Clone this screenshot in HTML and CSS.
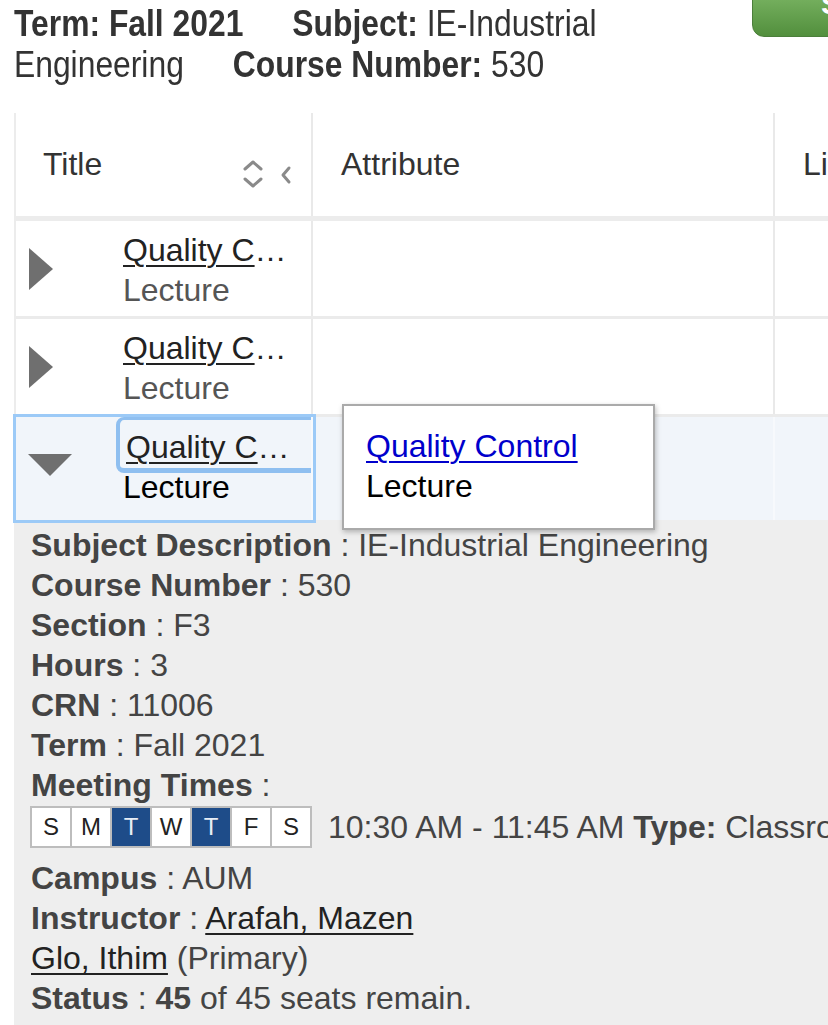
FILE: index.html
```html
<!DOCTYPE html>
<html lang="en">
<head>
<meta charset="utf-8">
<title>Course Search Results</title>
<link rel="stylesheet" href="styles.css">
</head>
<body>
<div class="page">
  <header class="summary">
    <span class="seg"><b>Term: Fall 2021</b></span><span class="seg"><b>Subject:</b> IE-Industrial Engineering</span><span class="seg"><b>Course Number:</b> 530</span>
  </header>
  <a class="btn-search" href="#">Search Again</a>

  <div class="results">
    <div class="row head">
      <div class="cell c1">
        <span class="htext">Title</span>
        <span class="sort">
          <svg width="22" height="30" viewBox="0 0 22 30" class="ico-sort"><path d="M3 10 L11 3 L19 10" /><path d="M3 20 L11 27 L19 20" /></svg>
          <svg width="12" height="20" viewBox="0 0 12 20" class="ico-left"><path d="M9 3 L3 10 L9 17" /></svg>
        </span>
      </div>
      <div class="cell c2"><span class="htext">Attribute</span></div>
      <div class="cell c3"><span class="htext">Linked Sections</span></div>
    </div>

    <div class="row">
      <div class="cell c1">
        <span class="toggle"><span class="tri-right"></span></span>
        <div class="ttl"><a class="tlink" href="#">Quality Control</a><div class="sched">Lecture</div></div>
      </div>
      <div class="cell c2"></div>
      <div class="cell c3"></div>
    </div>

    <div class="row">
      <div class="cell c1">
        <span class="toggle"><span class="tri-right"></span></span>
        <div class="ttl"><a class="tlink" href="#">Quality Control</a><div class="sched">Lecture</div></div>
      </div>
      <div class="cell c2"></div>
      <div class="cell c3"></div>
    </div>

    <div class="row open">
      <div class="cell c1">
        <span class="ring"></span>
        <span class="toggle"><span class="tri-down"></span></span>
        <div class="ttl"><a class="tlink focused" href="#">Quality Control</a><div class="sched">Lecture</div></div>
      </div>
      <div class="cell c2">
        <div class="tip">
          <a class="tip-link" href="#">Quality Control</a>
          <div class="tip-sched">Lecture</div>
        </div>
      </div>
      <div class="cell c3"></div>
    </div>
  </div>

  <div class="details">
    <div class="line"><b>Subject Description</b> : IE-Industrial Engineering</div>
    <div class="line"><b>Course Number</b> : 530</div>
    <div class="line"><b>Section</b> : F3</div>
    <div class="line"><b>Hours</b> : 3</div>
    <div class="line"><b>CRN</b> : 11006</div>
    <div class="line"><b>Term</b> : Fall 2021</div>
    <div class="line"><b>Meeting Times</b> :</div>
    <div class="meet">
      <div class="days">
        <span class="day">S</span><span class="day">M</span><span class="day on">T</span><span class="day">W</span><span class="day on">T</span><span class="day">F</span><span class="day">S</span>
      </div>
      <span class="time">10:30 AM - 11:45 AM <b>Type:</b> Classroom</span>
    </div>
    <div class="line"><b>Campus</b> : AUM</div>
    <div class="line"><b>Instructor</b> : <a class="person" href="#">Arafah, Mazen</a></div>
    <div class="line"><a class="person" href="#">Glo, Ithim</a> (Primary)</div>
    <div class="line"><b>Status</b> : <b>45</b> of 45 seats remain.</div>
  </div>
</div>
</body>
</html>
```

FILE: styles.css
```css
html, body {
  margin: 0;
  padding: 0;
  overflow: hidden;
  background: #fff;
}

body {
  font-family: "Liberation Sans", Arial, Helvetica, sans-serif;
  font-size: 32px;
  color: #333;
}

.page {
  position: relative;
  width: 828px;
  height: 1025px;
  padding-left: 14px;
  box-sizing: border-box;
  overflow: hidden;
}

/* top summary (condensed face approximated by a horizontal squeeze) */
.summary {
  width: 790px;
  padding-top: 3px;
  font-family: "Liberation Sans", Arial, sans-serif;
  font-size: 37px;
  line-height: 41px;
  color: #333;
  transform: scaleX(0.86);
  transform-origin: left top;
}
.summary .seg {
  margin-right: 57px;
}
.summary b {
  font-weight: bold;
}

.btn-search {
  position: absolute;
  left: 752px;
  top: -12px;
  width: 110px;
  height: 49px;
  box-sizing: border-box;
  padding: 0 0 0 68px;
  border: 1px solid #4c7f3b;
  border-radius: 12px;
  background: linear-gradient(#7db766, #528f3d);
  color: #fff;
  font-weight: bold;
  font-size: 30px;
  line-height: 30px;
  text-decoration: none;
  white-space: nowrap;
  overflow: hidden;
}

/* results grid */
.results {
  margin-top: 28px;
  width: 1100px;
  border-left: 2px solid #ececec;
}

.row {
  display: grid;
  grid-template-columns: 297px 462px 1fr;
  border-bottom: 3px solid #ebebeb;
  background: #fff;
}

.cell {
  box-sizing: border-box;
  border-right: 2px solid #e9e9e9;
  min-width: 0;
}

.row.head {
  height: 108px;
  border-bottom: 5px solid #ececec;
  box-sizing: border-box;
}
.row.head .cell {
  display: flex;
  align-items: center;
  padding-left: 27px;
  color: #333;
}
.row.head .c2,
.row.head .c3 {
  padding-left: 28px;
}
.htext {
  white-space: nowrap;
}
.sort {
  margin-left: auto;
  margin-right: 19px;
  margin-top: 20px;
  display: flex;
  align-items: center;
  gap: 16px;
}
.sort .ico-sort {
  margin-top: -2px;
}
.sort svg path {
  fill: none;
  stroke: #8a8a8a;
  stroke-width: 3;
  stroke-linecap: round;
  stroke-linejoin: round;
}

.row .c1 {
  display: flex;
  align-items: center;
  position: relative;
  overflow: hidden;
}

.toggle {
  width: 107px;
  flex: none;
  display: flex;
  align-items: center;
}
.tri-right {
  margin-left: 13px;
  width: 0;
  height: 0;
  border-top: 21px solid transparent;
  border-bottom: 21px solid transparent;
  border-left: 24px solid #6f6f6f;
  filter: blur(0.5px);
}
.tri-down {
  margin-left: 12px;
  margin-top: -8px;
  width: 0;
  height: 0;
  border-left: 22px solid transparent;
  border-right: 22px solid transparent;
  border-top: 22px solid #6f6f6f;
  filter: blur(0.5px);
}

.ttl {
  width: 170px;
  padding: 9px 0 6px;
  line-height: 40px;
}
.tlink {
  display: block;
  color: #222;
  text-decoration: underline;
  text-decoration-thickness: 2px;
  text-underline-offset: 4px;
  white-space: nowrap;
  overflow: hidden;
  text-overflow: ellipsis;
}
.sched {
  color: #555;
}

/* expanded / focused row */
.row.open {
  background: #f1f5fa;
  border-bottom: none;
}
.row.open .cell {
  border-right-color: #f7f9fc;
}
.row.open .c1 {
  outline: 3px solid #9ccaf7;
  z-index: 1;
}
.row.open .ttl {
  padding: 10px 0 13px;
}
.row.open .sched {
  color: #000;
}
.tlink.focused {
  padding-left: 3px;
}
.ring {
  position: absolute;
  left: 100px;
  top: 0;
  width: 240px;
  height: 56px;
  box-sizing: border-box;
  border: 4px solid #8fbff0;
  border-top-width: 3px;
  border-bottom-width: 5px;
  border-radius: 8px;
}

.row.open .c2 {
  position: relative;
}
.tip {
  position: absolute;
  left: 29px;
  top: -13px;
  width: 313px;
  height: 126px;
  box-sizing: border-box;
  padding: 20px 22px;
  background: #fff;
  border: 2px solid #aaa;
  box-shadow: 1px 2px 5px rgba(0, 0, 0, 0.25);
  line-height: 40px;
  z-index: 5;
}
.tip-link {
  color: #0000cc;
  text-decoration: underline;
  text-decoration-thickness: 2px;
  text-underline-offset: 4px;
}
.tip-sched {
  color: #000;
}

/* details panel */
.details {
  background: #eeeeee;
  padding: 5px 0 40px 17px;
  color: #444;
  line-height: 40px;
  white-space: nowrap;
  height: 600px;
}
.details b {
  color: #444;
}
.person {
  color: #222;
  text-decoration: underline;
  text-decoration-thickness: 2px;
  text-underline-offset: 4px;
}

.meet {
  display: flex;
  align-items: center;
  margin: 1px 0 10px -1px;
  height: 42px;
}
.days {
  display: flex;
  gap: 2px;
  border: 2px solid #bdbdbd;
  background: #bdbdbd;
}
.day {
  width: 38px;
  height: 38px;
  display: flex;
  align-items: center;
  justify-content: center;
  background: #fff;
  color: #222;
  font-size: 24px;
  line-height: 38px;
}
.day.on {
  background: #1e4c89;
  color: #e8eef6;
}
.time {
  margin-left: 16px;
  white-space: nowrap;
}
```
